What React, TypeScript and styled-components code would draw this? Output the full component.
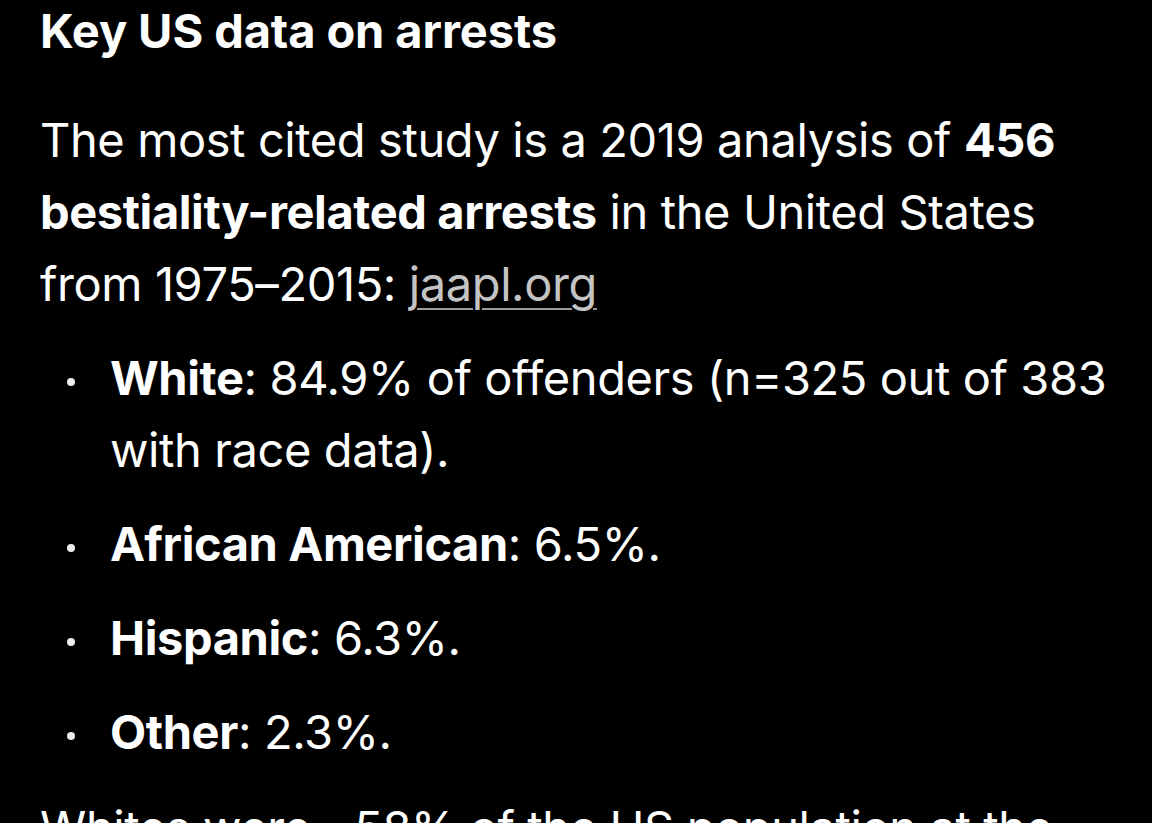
import styled, { createGlobalStyle } from 'styled-components'

const GlobalStyle = createGlobalStyle`
  html, body {
    margin: 0;
    padding: 0;
    background: #000;
    overflow: hidden;
  }
  body {
    font-family: Inter, 'Noto Sans', 'DejaVu Sans', sans-serif;
    color: #fff;
    -webkit-font-smoothing: antialiased;
  }
`

const Page = styled.main`
  height: 823px;
  overflow: hidden;
  padding: 0 30px 0 40px;
  box-sizing: border-box;
`

const Heading = styled.h3`
  margin: 0;
  padding-top: 3px;
  font-size: 47px;
  line-height: 56px;
  font-weight: 700;
  letter-spacing: -0.1px;
`

const Paragraph = styled.p<{ gapTop: number }>`
  margin: ${(props) => props.gapTop}px 0 0;
  font-size: 47px;
  line-height: 72px;
  font-weight: 400;
  letter-spacing: -0.4px;
`

const Link = styled.a`
  color: #c4c4c4;
  text-decoration: underline;
  text-decoration-thickness: 2px;
  text-underline-offset: 7px;
  text-decoration-color: #9a9a9a;
`

const List = styled.ul`
  list-style: none;
  margin: 22px 0 0;
  padding: 0 0 0 70px;
  display: flex;
  flex-direction: column;
  gap: 22px;
`

const Item = styled.li`
  position: relative;
  font-size: 47px;
  line-height: 72px;
  letter-spacing: -0.4px;

  &::before {
    content: '';
    position: absolute;
    left: -43px;
    top: 36px;
    width: 8px;
    height: 8px;
    border-radius: 50%;
    background: #ececec;
  }
`

const items = [
  { label: 'White', text: '84.9% of offenders (n=325 out of 383 with race data).' },
  { label: 'African American', text: '6.5%.' },
  { label: 'Hispanic', text: '6.3%.' },
  { label: 'Other', text: '2.3%.' },
]

export default function App() {
  return (
    <>
      <GlobalStyle />
      <Page>
        <Heading>Key US data on arrests</Heading>
        <Paragraph gapTop={45}>
          The most cited study is a 2019 analysis of <strong>456 bestiality-related arrests</strong> in the
          United States from 1975–2015: <Link href="#">jaapl.org</Link>
        </Paragraph>
        <List>
          {items.map((item) => (
            <Item key={item.label}>
              <strong>{item.label}</strong>: {item.text}
            </Item>
          ))}
        </List>
        <Paragraph gapTop={24}>Whites were ~58% of the US population at the</Paragraph>
      </Page>
    </>
  )
}
